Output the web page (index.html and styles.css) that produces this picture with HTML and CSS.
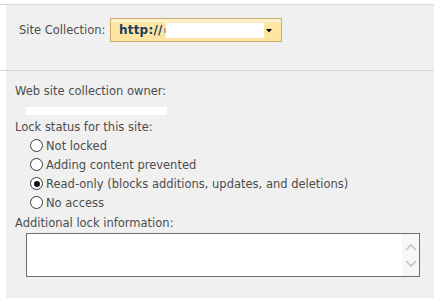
FILE: index.html
```html
<!DOCTYPE html>
<html>
<head>
<meta charset="utf-8">
<link rel="stylesheet" href="styles.css">
</head>
<body>
<div class="page">
  <div class="rule top-rule"></div>
  <div class="panel panel-top">
    <span class="label">Site Collection:</span>
    <div class="select">
      <span class="select-text">http://</span>
      <span class="select-mark">ı</span>
      <span class="redact redact-url"></span>
      <svg class="select-arrow" width="6" height="4" viewBox="0 0 6 4"><path d="M0 0H6L3 3.5Z" fill="#000"/></svg>
    </div>
  </div>
  <div class="rule"></div>
  <div class="panel panel-main">
    <div class="field-label">Web site collection owner:</div>
    <div class="owner">
      <span class="redact redact-owner"></span>
    </div>
    <div class="field-label">Lock status for this site:</div>
    <div class="radios">
      <div class="radio-row"><span class="radio"></span><span>Not locked</span></div>
      <div class="radio-row"><span class="radio"></span><span>Adding content prevented</span></div>
      <div class="radio-row"><span class="radio checked"></span><span>Read-only (blocks additions, updates, and deletions)</span></div>
      <div class="radio-row"><span class="radio"></span><span>No access</span></div>
    </div>
    <div class="field-label info-label">Additional lock information:</div>
    <div class="textarea">
      <div class="scrollbar">
        <svg width="12" height="8" viewBox="0 0 12 8"><path d="M1 7L6 2L11 7" fill="none" stroke="#c4c4c4" stroke-width="1.6"/></svg>
        <svg width="12" height="8" viewBox="0 0 12 8"><path d="M1 1L6 6L11 1" fill="none" stroke="#c4c4c4" stroke-width="1.6"/></svg>
      </div>
    </div>
  </div>
</div>
</body>
</html>
```
FILE: styles.css
```css
html, body {
  margin: 0;
  padding: 0;
  background: #ffffff;
}
body {
  font-family: "DejaVu Sans", Verdana, sans-serif;
  font-size: 11.5px;
  color: #4d4d4d;
  width: 434px;
  height: 298px;
  overflow: hidden;
}
.page {
  padding-top: 4px;
}
.rule {
  height: 1px;
  background: #d9d9d9;
}
.panel {
  margin-left: 6px;
  background: #f0f0f0;
}
.panel-top {
  height: 65px;
  box-sizing: border-box;
  padding: 13px 0 0 13px;
  display: flex;
  align-items: flex-start;
}
.label {
  line-height: 24px;
  width: 91px;
  flex: none;
  white-space: nowrap;
}
.select {
  width: 172px;
  height: 24px;
  box-sizing: border-box;
  border: 1px solid #cbab6c;
  background: linear-gradient(#fff3cf 0px, #fff3cf 2px, #fde7a6 4px, #fde4a0 100%);
  display: flex;
  align-items: center;
  padding-left: 8px;
  position: relative;
}
.select-text {
  font-weight: bold;
  color: #163e5e;
  font-size: 12px;
  letter-spacing: 0.2px;
}
.select-mark {
  color: #7a6a50;
  font-size: 9px;
  margin-left: 1px;
}
.redact {
  display: inline-block;
  background: #ffffff;
}
.redact-url {
  width: 98px;
  height: 15px;
  margin-left: 0px;
}
.select-arrow {
  margin-left: 2px;
  margin-top: 2px;
}
.panel-main {
  height: 227px;
  box-sizing: border-box;
  padding: 14px 0 0 9px;
}
.field-label {
  line-height: 13px;
  height: 13px;
  white-space: nowrap;
}
.owner {
  height: 23px;
  display: flex;
  align-items: center;
  padding-left: 11px;
}
.redact-owner {
  width: 141px;
  height: 8px;
  margin-top: 2px;
}
.radios {
  padding-left: 15px;
  padding-top: 2px;
}
.radio-row {
  height: 19px;
  display: flex;
  align-items: center;
  gap: 3px;
  white-space: nowrap;
}
.radio {
  width: 11px;
  height: 11px;
  border: 1px solid #3a3a3a;
  border-radius: 50%;
  background: #ffffff;
  position: relative;
  flex: none;
}
.radio.checked::after {
  content: "";
  position: absolute;
  left: 2.5px;
  top: 2.5px;
  width: 6px;
  height: 6px;
  border-radius: 50%;
  background: #111111;
}
.info-label {
  margin-top: 5px;
}
.textarea {
  margin-top: 3px;
  margin-left: 11px;
  width: 394px;
  height: 44px;
  box-sizing: border-box;
  border: 1px solid #6f6f6f;
  background: #ffffff;
  display: flex;
  justify-content: flex-end;
}
.scrollbar {
  width: 17px;
  background: #f7f7f7;
  display: flex;
  flex-direction: column;
  align-items: center;
  justify-content: space-around;
  padding: 4px 0;
  box-sizing: border-box;
}
```
